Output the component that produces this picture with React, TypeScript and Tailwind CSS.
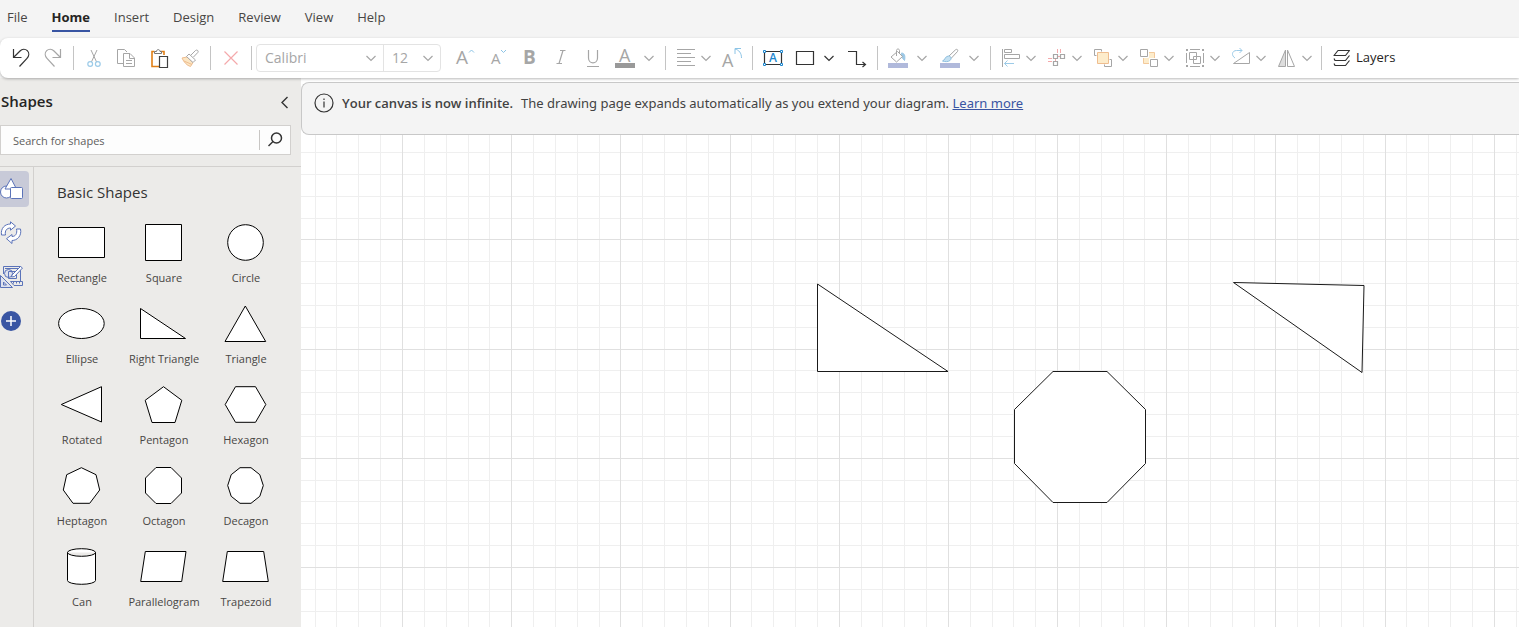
import React, { useState } from "react";

const tabs = ["File", "Home", "Insert", "Design", "Review", "View", "Help"];

type IconProps = { children: React.ReactNode; className?: string };

function Icon({ children, className = "text-[#a6a6a6]" }: IconProps) {
  return (
    <svg
      viewBox="0 0 20 20"
      fill="none"
      stroke="currentColor"
      aria-hidden="true"
      className={`w-5 h-5 shrink-0 overflow-visible ${className}`}
    >
      {children}
    </svg>
  );
}

function Chevron({ className = "text-[#a6a6a6]" }: { className?: string }) {
  return (
    <svg viewBox="0 0 12 12" fill="none" stroke="currentColor" aria-hidden="true" className={`w-3 h-3 shrink-0 ${className}`}>
      <path d="M1.5 4L6 8.5L10.5 4" strokeWidth="1.2" />
    </svg>
  );
}

function Letter({ x, y, size, children, className = "" }: { x: number; y: number; size: number; children: string; className?: string }) {
  return (
    <text x={x} y={y} fontSize={size} fill="currentColor" stroke="none" className={className}>
      {children}
    </text>
  );
}

function ToolButton({ label, children }: { label: string; children: React.ReactNode }) {
  return (
    <button type="button" aria-label={label} className="w-8 h-8 shrink-0 flex items-center justify-center">
      {children}
    </button>
  );
}

type SplitProps = { label: string; size?: string; chevron?: string; children: React.ReactNode };

function SplitButton({ label, size = "w-[46px] gap-1", chevron, children }: SplitProps) {
  return (
    <button type="button" aria-label={label} className={`h-8 pl-1.5 shrink-0 flex items-center ${size}`}>
      {children}
      <Chevron className={chevron} />
    </button>
  );
}

function Separator() {
  return <div className="w-px h-6 mx-1 shrink-0 bg-[#c4c4c4]" />;
}

function Toolbar() {
  const [font, setFont] = useState("Calibri");
  const [fontSize, setFontSize] = useState("12");

  return (
    <div className="relative z-10 flex items-center h-10 pl-[5px] bg-white rounded-l-lg shadow-[0_1px_3px_rgba(0,0,0,0.28)]">
      <ToolButton label="Undo">
        <Icon className="text-[#333333]">
          <path d="M2.5 1V9.5H10.5M2.5 9.5L9 3C11.2 .8 14.3 .7 16.3 2.7C18.4 4.8 18.2 8 16 10.4L8.5 18.5" strokeWidth="1.2" />
        </Icon>
      </ToolButton>
      <ToolButton label="Redo">
        <Icon>
          <path d="M17.5 1V9.5H9.5M17.5 9.5L11 3C8.8 .8 5.7 .7 3.7 2.7C1.6 4.8 1.8 8 4 10.4L11.5 18.5" strokeWidth="1.2" />
        </Icon>
      </ToolButton>
      <Separator />
      <ToolButton label="Cut">
        <Icon>
          <path d="M7 2L12.6 14M13 2L7.4 14" />
          <g stroke="#9ccbe8" strokeWidth="1.2">
            <circle cx="6.2" cy="16" r="2.4" />
            <circle cx="13.8" cy="16" r="2.4" />
          </g>
        </Icon>
      </ToolButton>
      <ToolButton label="Copy">
        <Icon>
          <path d="M7.5 15.5H1.5V1.5H8.5L11 4" />
          <path d="M7.5 5.5H14L18.5 10V18.5H7.5ZM13.5 5.5V10.5H18.5M10 12.5H16M10 15.5H16" />
        </Icon>
      </ToolButton>
      <ToolButton label="Paste">
        <Icon className="text-[#404040]">
          <path d="M6.5 3.5H4V18.5H11M12.5 3.5H16V7" stroke="#e07f16" strokeWidth="1.6" />
          <path d="M6.5 5.5V3.5H8.5C8.5 1 12 1 12 3.5H13.5V5.5Z" stroke="#777777" fill="#ffffff" />
          <path d="M11.5 8.5H19.5V19.5H11.5Z" fill="#ffffff" strokeWidth="1.2" />
        </Icon>
      </ToolButton>
      <ToolButton label="Format painter">
        <Icon>
          <path d="M2 10L7 9L13 14.5L10.5 18.5C7 17.5 4 14.5 2 10Z" fill="#fbe6c4" stroke="#efbd8f" />
          <path d="M4 13L12 16.5" stroke="#efbd8f" />
          <path d="M6.5 8.5L9 6L15.5 12L13 14.5ZM11 7L15.5 2.5C17 1.2 19 3 17.8 4.5L13.5 9" fill="#ffffff" />
        </Icon>
      </ToolButton>
      <Separator />
      <ToolButton label="Delete">
        <Icon className="text-[#f4a9ab]">
          <path d="M3.5 3.5L16.5 16.5M16.5 3.5L3.5 16.5" strokeWidth="1.2" />
        </Icon>
      </ToolButton>
      <Separator />

      <div className="flex h-7 w-[185px] mr-2 shrink-0 border border-[#e3e3e3] rounded text-sm text-[#a6a6a6]">
        <div className="relative flex w-[127px] border-r border-[#e3e3e3]">
          <select
            aria-label="Font"
            value={font}
            onChange={(e) => setFont(e.target.value)}
            className="w-full pl-2 appearance-none bg-transparent"
          >
            <option>Calibri</option>
            <option>Arial</option>
          </select>
          <span className="absolute right-1.5 inset-y-0 flex items-center pointer-events-none">
            <Chevron />
          </span>
        </div>
        <div className="relative flex flex-1">
          <select
            aria-label="Font size"
            value={fontSize}
            onChange={(e) => setFontSize(e.target.value)}
            className="w-full pl-2 appearance-none bg-transparent"
          >
            <option>12</option>
            <option>14</option>
          </select>
          <span className="absolute right-1.5 inset-y-0 flex items-center pointer-events-none">
            <Chevron />
          </span>
        </div>
      </div>

      <ToolButton label="Increase font size">
        <Icon>
          <Letter x={1} y={16} size={19}>A</Letter>
          <path d="M14 4.5L16.5 2L19 4.5" stroke="#8cc4e6" />
        </Icon>
      </ToolButton>
      <ToolButton label="Decrease font size">
        <Icon>
          <Letter x={4} y={16} size={15}>A</Letter>
          <path d="M14 2L16.5 4.5L19 2" stroke="#8cc4e6" />
        </Icon>
      </ToolButton>
      <ToolButton label="Bold">
        <Icon>
          <Letter x={4} y={16} size={19} className="font-bold">B</Letter>
        </Icon>
      </ToolButton>
      <ToolButton label="Italic">
        <Icon>
          <path d="M9 2.5H14.5M5.5 15.5H11M12 2.5L8 15.5" strokeWidth="1.2" />
        </Icon>
      </ToolButton>
      <ToolButton label="Underline">
        <Icon>
          <path d="M5.5 2V10C5.5 16.5 14.5 16.5 14.5 10V2M4 18.5H16" strokeWidth="1.2" />
        </Icon>
      </ToolButton>
      <SplitButton label="Font color" size="w-[52px] gap-2">
        <Icon>
          <Letter x={4} y={14} size={18}>A</Letter>
          <path d="M0 17.5H20" stroke="#999999" strokeWidth="5" />
        </Icon>
      </SplitButton>
      <Separator />
      <SplitButton label="Align text">
        <Icon>
          <path d="M1 1.5H19M1 5.5H15M1 9.5H19M1 13.5H15M1 17.5H19" strokeWidth="1.2" />
        </Icon>
      </SplitButton>
      <ToolButton label="Rotate text">
        <Icon>
          <Letter x={0} y={19} size={18}>A</Letter>
          <path d="M19.5 10C19.5 5 17 2 13 1M13 6V.5H19" stroke="#8cc4e6" />
        </Icon>
      </ToolButton>
      <Separator />
      <ToolButton label="Text box">
        <Icon className="text-[#333333]">
          <path d="M1.5 3.5H18.5V16.5H1.5Z" strokeWidth="1.2" />
          <Letter x={6} y={14} size={12} className="fill-[#1e88d0] font-semibold">A</Letter>
          <path
            d="M.5 2.5H2.5V4.5H.5ZM17.5 2.5H19.5V4.5H17.5ZM.5 15.5H2.5V17.5H.5ZM17.5 15.5H19.5V17.5H17.5Z"
            fill="#ffffff"
            stroke="#1e88d0"
          />
        </Icon>
      </ToolButton>
      <SplitButton label="Shape" size="w-[52px] gap-2" chevron="text-[#333333]">
        <Icon className="text-[#333333]">
          <path d="M1.5 3.5H18.5V16.5H1.5Z" strokeWidth="1.2" />
        </Icon>
      </SplitButton>
      <ToolButton label="Connector">
        <Icon className="text-[#333333]">
          <path d="M1 3.5H9.5V16.5H18.5M15.5 14L18.5 16.5L15.5 19" strokeWidth="1.2" />
        </Icon>
      </ToolButton>
      <Separator />
      <SplitButton label="Fill" size="w-[52px] gap-2">
        <Icon>
          <path d="M13.5 5C16.5 5 17.5 8 16.5 12.5L14 9.5Z" fill="#9cc8e6" stroke="#9cc8e6" />
          <path d="M3 9L9.5 3.5L14.5 8.5L8.5 14ZM8.5 8V2.5C8.5 .5 11.5 .5 11.5 2.5V6" fill="#ffffff" />
          <path d="M0 17.5H20" stroke="#b0b9db" strokeWidth="5" />
        </Icon>
      </SplitButton>
      <SplitButton label="Line" size="w-[52px] gap-2">
        <Icon>
          <path d="M8.5 8.5L15.5 1.8C17 .6 18.4 2 17.5 3.5L11 10.5Z" fill="#ffffff" />
          <path d="M8.5 8C11 8 12 10.5 10 12.5C8 14 5 13.8 2.5 13C5 12.5 5 8 8.5 8Z" fill="#c5e1f2" stroke="#8fc0e0" />
          <path d="M0 17.5H20" stroke="#b0b9db" strokeWidth="5" />
        </Icon>
      </SplitButton>
      <Separator />
      <SplitButton label="Align">
        <Icon>
          <path d="M1.5 1V19M3.5 1.5H10.5V4.5H3.5ZM3.5 6.5H18.5V10.5H3.5Z" />
          <path d="M13 15.5H3.5M6.5 12.5L3.5 15.5L6.5 18.5" stroke="#9ccbe8" />
        </Icon>
      </SplitButton>
      <SplitButton label="Distribute">
        <Icon>
          <path d="M10.5 1V5M13.5 1V5M1 10.5H5M1 13.5H5M8.5 10.5V13.5M10.5 8.5H13.5" stroke="#f4a9ab" />
          <path d="M6.5 6.5H10.5V10.5H6.5ZM13.5 6.5H17.5V10.5H13.5ZM6.5 13.5H10.5V17.5H6.5Z" strokeWidth="1.2" />
        </Icon>
      </SplitButton>
      <SplitButton label="Bring to front">
        <Icon>
          <path d="M3.5 7.5H1.5V1.5H8.5V3.5M16.5 11.5H18.5V18.5H11.5V16.5" />
          <path d="M4.5 4.5H15.5V15.5H4.5Z" fill="#fdeccb" stroke="#efbd8f" />
        </Icon>
      </SplitButton>
      <SplitButton label="Arrange">
        <Icon>
          <path d="M4.5 4.5H15.5V15.5H4.5Z" fill="#fdeccb" stroke="#f3c99b" />
          <path d="M9.5 4V9.5H4V1H9.5ZM10.5 16V10.5H16" stroke="#ffffff" fill="#ffffff" />
          <path d="M1.5 1.5H8.5V8.5H1.5ZM11.5 11.5H18.5V18.5H11.5Z" fill="#ffffff" />
        </Icon>
      </SplitButton>
      <SplitButton label="Group">
        <Icon>
          <path d="M4.5 4.5H11.5V11.5H4.5ZM8.5 8.5H15.5V15.5H8.5ZM5 1.5H15M5 18.5H15M1.5 5V15M18.5 5V15" />
          <path d="M1 1H3V3H1ZM17 1H19V3H17ZM1 17H3V19H1ZM17 17H19V19H17Z" fill="currentColor" stroke="none" />
        </Icon>
      </SplitButton>
      <SplitButton label="Rotate">
        <Icon>
          <path d="M2.5 15.5H18.5V4.5Z" />
          <path d="M4 10C0 7.5 1 2.5 5.5 2.5H11M8.5 0L11 2.5L8.5 5" stroke="#9ccbe8" />
        </Icon>
      </SplitButton>
      <SplitButton label="Flip">
        <Icon>
          <path d="M1.5 18.5H8.5V2Z" fill="#dddddd" />
          <path d="M10.5 2V18.5H17.5Z" />
        </Icon>
      </SplitButton>
      <Separator />
      <button type="button" className="h-8 pl-1.5 shrink-0 flex items-center gap-1 text-[13px] text-[#252423]">
        <Icon className="text-[#333333]">
          <path
            d="M6 2.5H17.5L13.5 7.5H2ZM2 10.5L3 12.5H13.5L17.5 7.5M2 15.5L3 17.5H13.5L17.5 12.5"
            strokeWidth="1.2"
            strokeLinejoin="round"
          />
        </Icon>
        Layers
      </button>
    </div>
  );
}

const shapes = [
  { name: "Rectangle", d: "M1.5 9.5H47.5V39.5H1.5Z" },
  { name: "Square", d: "M6.5 6.5H42.5V42.5H6.5Z" },
  { name: "Circle", d: "M6.7 24.5A17.8 17.8 0 1 1 42.3 24.5A17.8 17.8 0 1 1 6.7 24.5Z" },
  { name: "Ellipse", d: "M1.6 24.5A22.8 15 0 1 1 47.2 24.5A22.8 15 0 1 1 1.6 24.5Z" },
  { name: "Right Triangle", d: "M1.5 9.5V39.5H46.5Z" },
  { name: "Triangle", d: "M24.3 7L44.7 42.5H4Z" },
  { name: "Rotated", d: "M44.5 6.7V42L4.3 24.5Z" },
  { name: "Pentagon", d: "M24.5 6.7L42.8 20.3L36 42.5H13L6.2 20.3Z" },
  { name: "Hexagon", d: "M4.2 24.5L14.5 6.7H34.5L44.8 24.5L34.5 42.3H14.5Z" },
  { name: "Heptagon", d: "M24.4 6.7L39 13.7L42.7 29L32.7 42.3H16L6.3 29L9.7 13.7Z" },
  { name: "Octagon", d: "M17 6.5H32L42.5 17V32L32 42.5H17L6.5 32V17Z" },
  { name: "Decagon", d: "M19 6.7H30L38.8 13.7L42.3 24.5L38.8 35.3L30 42.3H19L10.2 35.3L6.7 24.5L10.2 13.7Z" },
  { name: "Can", d: "M10.5 10.5A14 3.8 0 0 1 38.5 10.5V38.5A14 3.8 0 0 1 10.5 38.5ZM10.5 10.5A14 3.8 0 0 0 38.5 10.5" },
  { name: "Parallelogram", d: "M6.3 9.5H47L42.7 39.5H1.7Z" },
  { name: "Trapezoid", d: "M6.3 9.5H42.7L47.3 39.5H1.7Z" },
];

function ShapesPanel({ onCollapse }: { onCollapse: () => void }) {
  const [search, setSearch] = useState("");

  return (
    <aside className="w-[301px] shrink-0 flex flex-col bg-[#ecebe9]">
      <div className="flex items-center justify-between h-[46px] pl-px pr-1.5">
        <h2 className="text-[15px] font-semibold text-[#252423]">Shapes</h2>
        <button type="button" aria-label="Collapse panel" onClick={onCollapse}>
          <Icon className="text-[#333333]">
            <path d="M12.5 6L7 11.5L12.5 17" strokeWidth="1.4" />
          </Icon>
        </button>
      </div>

      <form
        role="search"
        onSubmit={(e) => e.preventDefault()}
        className="flex items-center h-[30px] mt-px mr-2.5 bg-[#fdfdfd] border border-[#d2d0ce]"
      >
        <input
          type="text"
          aria-label="Search for shapes"
          placeholder="Search for shapes"
          value={search}
          onChange={(e) => setSearch(e.target.value)}
          className="flex-1 min-w-0 pl-3 pt-0.5 text-[11px] text-[#333333] placeholder:text-[#605e5c] outline-none"
        />
        <button type="submit" aria-label="Search" className="w-[31px] h-5 border-l border-[#c8c6c4] flex items-center justify-center">
          <Icon className="text-[#333333]">
            <circle cx="11.5" cy="8" r="5" strokeWidth="1.5" />
            <path d="M8 11.5L3.5 16" strokeWidth="1.5" />
          </Icon>
        </button>
      </form>

      <div className="flex flex-1 min-h-0 mt-[11px] border-t border-[#d2d0ce]">
        <nav aria-label="Stencils" className="w-[34px] shrink-0 flex flex-col gap-2 pt-1 border-r border-[#d2d0ce]">
          <button type="button" aria-label="Basic shapes" aria-pressed="true" className="w-[29px] h-9 flex items-center rounded-r bg-[#c8cad8]">
            <svg viewBox="0 0 24 24" fill="#ffffff" stroke="#5b73b9" className="w-6 h-6">
              <circle cx="6.5" cy="15" r="6" />
              <path d="M11 1.5L16.5 12H5Z" strokeLinejoin="round" />
              <rect x="10.5" y="10.5" width="12" height="11" rx="1" />
            </svg>
          </button>
          <button type="button" aria-label="Cycle shapes" className="w-[29px] h-9 flex items-center">
            <svg viewBox="0 0 24 24" fill="#ffffff" stroke="#5b73b9" strokeLinejoin="round" className="w-6 h-6">
              <path d="M1.5 14C.5 7 5 3 10.5 3V.8L15.5 5L10.5 9.2V7C7 7 4.5 9.5 5.5 14Z" />
              <path d="M20.5 8C22 15 17 19.5 12 19.5V22.5L6.5 17.7L12 13.5V15.5C15.5 15.5 17.5 12.5 16.5 8Z" />
            </svg>
          </button>
          <button type="button" aria-label="Drawing tools" className="w-[29px] h-9 flex items-center">
            <svg viewBox="0 0 24 24" fill="none" stroke="#5b73b9" className="w-6 h-6">
              <path d="M3.5 9V1.5H20.5V17M5 3.5H18" />
              <circle cx="8.5" cy="8.5" r="4" fill="#dfe2ee" />
              <path d="M8.5 6.5H16.5V13.5H8.5Z" />
              <path d="M12 10L20.5 1.5L22.5 3L14.5 11.5L11.5 12Z" fill="#ffffff" />
              <path d="M.5 10.5L12.5 22.5H.5ZM3.5 17V20H6.5Z" fill="#dfe2ee" />
              <path d="M10.5 16.5H22.5V20.5H14ZM13.5 16.5V18.5M16.5 16.5V18.5M19.5 16.5V18.5" />
            </svg>
          </button>
          <button type="button" aria-label="Add shapes" className="w-[29px] h-9 flex items-center">
            <svg viewBox="0 0 24 24" fill="none" className="w-6 h-6">
              <circle cx="11" cy="12" r="10" fill="#3955a3" />
              <path d="M11 7V17M6 12H16" stroke="#ffffff" strokeWidth="1.5" />
            </svg>
          </button>
        </nav>

        <section className="flex-1 pl-1.5 overflow-hidden">
          <h3 className="h-[51px] pl-[17px] flex items-center text-[15px] text-[#333333]">Basic Shapes</h3>
          <ul className="grid grid-cols-[82px_82px_82px]">
            {shapes.map((shape) => (
              <li key={shape.name}>
                <button type="button" className="w-full h-[81px] flex flex-col items-center">
                  <svg viewBox="0 0 48 48" fill="#ffffff" stroke="#000000" aria-hidden="true" className="w-12 h-12">
                    <path d={shape.d} />
                  </svg>
                  <span className="mt-1 pl-0.5 text-[11px] leading-4 whitespace-nowrap text-[#484644]">{shape.name}</span>
                </button>
              </li>
            ))}
          </ul>
        </section>
      </div>
    </aside>
  );
}

const MAJOR = 109.17;
const MINOR = MAJOR / 5;

// index 0 is the first major line; negative ones are the minor lines before it
const gridLines = Array.from({ length: 180 }, (_, i) => i - 5);

function Canvas() {
  const x = (i: number) => Math.round(101 + i * MINOR) + 0.5;
  const y = (i: number) => Math.round(104.4 + i * MINOR) + 0.5;
  const color = (i: number) => (i % 5 === 0 ? "#e0e0e0" : "#efefef");
  const ordered = [...gridLines.filter((i) => i % 5 !== 0), ...gridLines.filter((i) => i % 5 === 0)];

  return (
    <svg role="img" aria-label="Drawing page" className="flex-1 w-full min-h-0 bg-white">
      {ordered.map((i) => (
        <g key={i} stroke={color(i)}>
          <line x1={x(i)} x2={x(i)} y1="0" y2="100%" />
          <line x1="0" x2="100%" y1={y(i)} y2={y(i)} />
        </g>
      ))}
      <g fill="#ffffff" stroke="#1a1a1a">
        <path d="M516.5 149V236.5H647Z" />
        <path d="M932.5 147.5L1063 150.5L1061 237.5Z" />
        <path d="M752 236.5H806L844.5 274.5V328.5L806 367.5H752L713.5 328.5V274.5Z" />
      </g>
    </svg>
  );
}

function App() {
  const [activeTab, setActiveTab] = useState("Home");
  const [panelOpen, setPanelOpen] = useState(true);

  return (
    <div className="flex flex-col h-screen overflow-hidden bg-[#f4f4f4] font-['Open_Sans','Noto_Sans',sans-serif]">
      <nav aria-label="Ribbon tabs" className="flex items-center gap-6 h-[38px] pl-[7px] text-[13px] text-[#484644]">
        {tabs.map((tab) => (
          <button
            key={tab}
            type="button"
            onClick={() => setActiveTab(tab)}
            className={
              tab === activeTab
                ? "h-7 mb-0.5 pt-0.5 border-b-2 border-[#3955a3] font-bold text-[#252423]"
                : "h-7 mb-0.5 pt-0.5 border-b-2 border-transparent"
            }
          >
            {tab}
          </button>
        ))}
      </nav>

      <Toolbar />

      <div className="flex flex-1 min-h-0">
        {panelOpen && <ShapesPanel onCollapse={() => setPanelOpen(false)} />}
        <main className="flex-1 min-w-0 flex flex-col pt-1 bg-white">
          <div className="flex items-start gap-2 h-[53px] shrink-0 pl-3 pt-2.5 bg-[#f4f4f4] border border-r-0 border-[#c8c8c8] rounded-l-lg text-[13px] leading-5 text-[#424242] whitespace-nowrap">
            <Icon className="text-[#333333]">
              <circle cx="10" cy="10" r="9" strokeWidth="1.2" />
              <path d="M10 8.5V14.5M10 5.5V7" strokeWidth="1.2" />
            </Icon>
            <strong className="font-semibold">Your canvas is now infinite.</strong>
            <p className="font-['Noto_Sans','Open_Sans',sans-serif]">
              The drawing page expands automatically as you extend your diagram.{" "}
              <a href="#" className="text-[#3955a3] underline">
                Learn more
              </a>
            </p>
          </div>
          <Canvas />
        </main>
      </div>
    </div>
  );
}

export default App;
